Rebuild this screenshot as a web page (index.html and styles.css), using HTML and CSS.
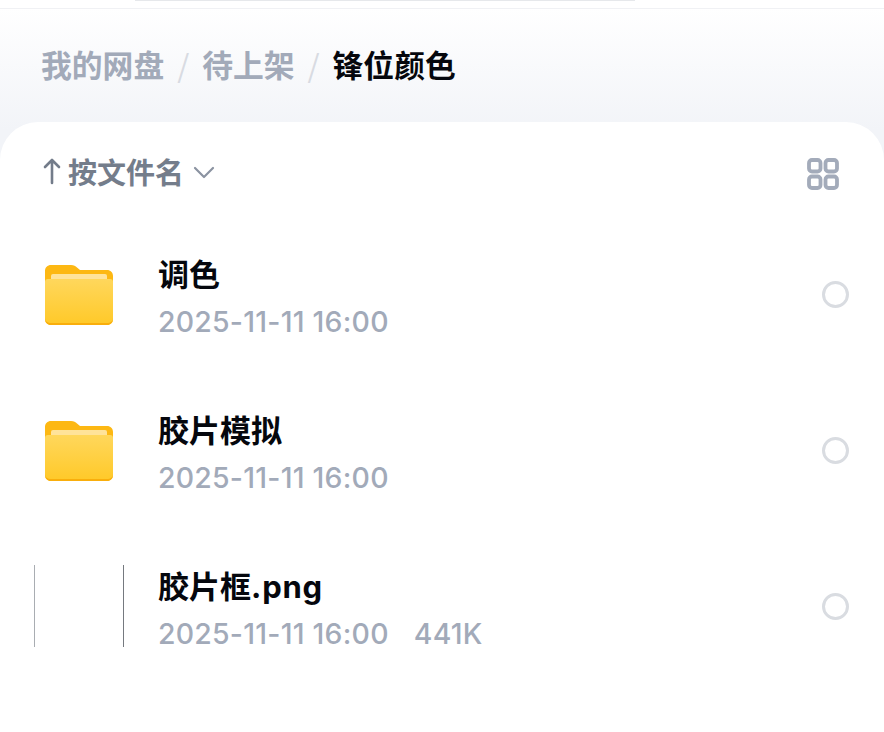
FILE: index.html
```html
<!DOCTYPE html>
<html lang="zh-CN">
<head>
  <meta charset="utf-8">
  <title>锋位颜色</title>
  <link rel="stylesheet" href="styles.css">
</head>
<body>
  <div class="topbar"><div class="topbar-edge"></div></div>
  <header class="crumbs">
    <span class="crumb">我的网盘</span>
    <span class="crumb-sep">/</span>
    <span class="crumb">待上架</span>
    <span class="crumb-sep">/</span>
    <span class="crumb crumb-current">锋位颜色</span>
  </header>
  <main class="card">
    <div class="sortbar">
      <div class="sort">
        <svg class="sort-arrow" width="18" height="28" viewBox="0 0 18 28" fill="none" stroke="#737c8a" stroke-width="2.6" stroke-linecap="round" stroke-linejoin="round"><path d="M9 26V3M2 10l7-7 7 7"/></svg>
        <span class="sort-label">按文件名</span>
        <svg class="sort-chevron" width="22" height="13" viewBox="0 0 22 13" fill="none" stroke="#8b93a1" stroke-width="2.2" stroke-linecap="round" stroke-linejoin="round"><path d="M2 2l9 9 9-9"/></svg>
      </div>
      <svg class="grid-icon" width="32" height="32" viewBox="0 0 32 32" fill="none" stroke="#a3abba" stroke-width="3.8"><rect x="2" y="2" width="11.5" height="11.5" rx="3"/><rect x="18.5" y="2" width="11.5" height="11.5" rx="3"/><rect x="2" y="18.5" width="11.5" height="11.5" rx="3"/><rect x="18.5" y="18.5" width="11.5" height="11.5" rx="3"/></svg>
    </div>

    <div class="row">
      <svg class="folder" width="68" height="60" viewBox="0 0 68 60"><use href="#folder-shape"/></svg>
      <div class="info">
        <div class="name">调色</div>
        <div class="meta"><span>2025-11-11 16:00</span></div>
      </div>
      <span class="radio"></span>
    </div>

    <div class="row">
      <svg class="folder" width="68" height="60" viewBox="0 0 68 60"><use href="#folder-shape"/></svg>
      <div class="info">
        <div class="name">胶片模拟</div>
        <div class="meta"><span>2025-11-11 16:00</span></div>
      </div>
      <span class="radio"></span>
    </div>

    <div class="row">
      <div class="thumb"></div>
      <div class="info">
        <div class="name">胶片框<span class="ext">.png</span></div>
        <div class="meta"><span>2025-11-11 16:00</span><span class="size">441K</span></div>
      </div>
      <span class="radio"></span>
    </div>
  </main>

  <svg class="defs" width="0" height="0">
    <defs>
      <linearGradient id="folder-front" x1="0" y1="0" x2="0" y2="1">
        <stop offset="0" stop-color="#ffd75c"/>
        <stop offset="1" stop-color="#ffc928"/>
      </linearGradient>
      <symbol id="folder-shape" viewBox="0 0 68 60">
        <path d="M6 0h20c3 0 4.500 1 6 2.500L35 5h27c3.500 0 6 2.500 6 6v20H0V6c0-3.500 2.500-6 6-6z" fill="#fdb813"/>
        <rect x="6" y="9" width="56" height="8" rx="2" fill="#ffe39a"/>
        <path d="M3 14h62c2 0 3 1 3 3v37c0 3.500-2.500 6-6 6H6c-3.500 0-6-2.500-6-6V17c0-2 1-3 3-3z" fill="url(#folder-front)"/>
        <path d="M0 54c0 3.500 2.500 6 6 6h56c3.500 0 6-2.500 6-6v-1c0 3-2.500 5-6 5H6c-3.500 0-6-2-6-5z" fill="#f9ae0c"/>
      </symbol>
    </defs>
  </svg>
</body>
</html>
```

FILE: styles.css
```css
html, body {
  margin: 0;
  padding: 0;
}
body {
  width: 884px;
  height: 732px;
  overflow: hidden;
  background: linear-gradient(#ffffff 8px, #f2f4f8 130px);
  font-family: "Inter", "Noto Sans CJK SC", sans-serif;
}
.topbar {
  height: 8px;
  background-color: #fff;
  border-bottom: 1px solid #f0f1f4;
}
.topbar-edge {
  width: 500px;
  height: 1px;
  margin-left: 135px;
  background-color: #e6e8eb;
}
.crumbs {
  display: flex;
  align-items: center;
  height: 113px;
  box-sizing: border-box;
  padding-left: 41px;
  padding-bottom: 4px;
  font-family: "Noto Sans CJK SC", sans-serif;
  font-size: 30.8px;
  font-weight: 700;
  color: #a2aab9;
}
.crumb-sep {
  width: 38px;
  text-align: center;
  font-weight: 400;
  color: #d8dbe2;
}
.crumb-current {
  color: #05070d;
}
.card {
  height: 610px;
  box-sizing: border-box;
  padding-top: 27px;
  background-color: #fff;
  border-radius: 38px 38px 0 0;
}
.sortbar {
  display: flex;
  align-items: center;
  justify-content: space-between;
  height: 44px;
  margin-bottom: 23px;
  padding: 0 45px 0 43px;
}
.sort {
  display: flex;
  align-items: center;
}
.sort-arrow {
  margin-right: 7px;
}
.sort-label {
  font-family: "Noto Sans CJK SC", sans-serif;
  font-size: 29px;
  font-weight: 700;
  color: #747d8b;
}
.sort-chevron {
  margin-left: 9px;
  margin-top: 2px;
}
.grid-icon {
  margin-top: 6px;
}
.row {
  display: flex;
  align-items: center;
  height: 156px;
  padding-left: 45px;
  padding-right: 35px;
}
.folder {
  flex: none;
  margin-top: 2px;
  margin-right: 45px;
}
.thumb {
  flex: none;
  width: 88px;
  height: 82px;
  margin-left: -11px;
  margin-right: 34px;
  border-left: 1px solid #a9adb2;
  border-right: 1px solid #75797f;
}
.info {
  flex: 1;
  padding-top: 8px;
}
.name {
  height: 46px;
  line-height: 46px;
  font-family: "Inter", "Noto Sans CJK SC", sans-serif;
  font-size: 31px;
  font-weight: 700;
  color: #05070d;
}
.ext {
  letter-spacing: 0.8px;
}
.meta {
  height: 46px;
  line-height: 48px;
  font-size: 28.4px;
  font-weight: 500;
  letter-spacing: 0.25px;
  color: #a2aab9;
}
.size {
  margin-left: 25px;
}
.radio {
  flex: none;
  width: 21px;
  height: 21px;
  border: 3px solid #d9dce1;
  border-radius: 50%;
}
.defs {
  position: absolute;
}
```
